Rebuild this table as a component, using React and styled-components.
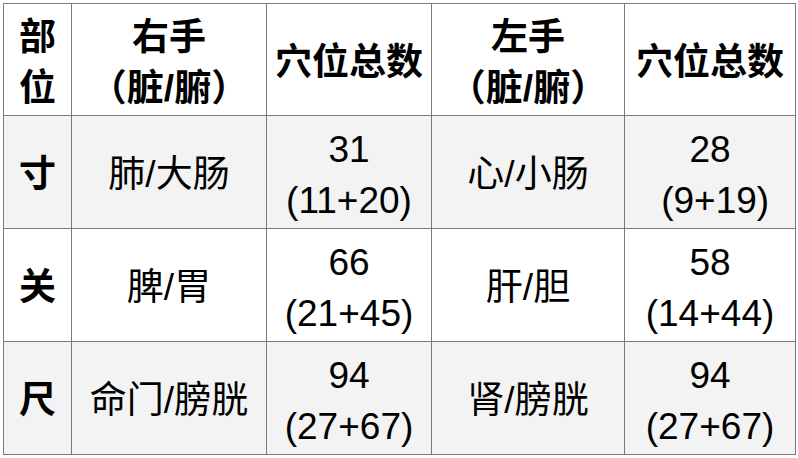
import React from 'react';
import styled, { createGlobalStyle } from 'styled-components';

const GlobalStyle = createGlobalStyle`
    html, body {
        margin: 0;
        padding: 0;
        background: #ffffff;
    }
    body {
        font-family: "Liberation Sans", "Noto Sans CJK SC", sans-serif;
        color: #000000;
    }
`;

const Table = styled.table`
    margin: 3px;
    width: 792px;
    border-collapse: collapse;
    table-layout: fixed;
    font-size: 37px;
    line-height: 51px;
`;

const Col = styled.col`
    width: ${props => props.w}px;
`;

const HeadCell = styled.th`
    border: 1px solid #7a7a7a;
    height: 105px;
    padding: 6px 0 0;
    font-weight: 700;
    text-align: center;
    vertical-align: middle;
    background: #ffffff;
`;

const Row = styled.tr`
    background: ${props => props.shaded ? '#f3f3f3' : '#ffffff'};
`;

const RowHead = styled.th`
    border: 1px solid #7a7a7a;
    height: 107px;
    padding: 5px 0 0;
    font-weight: 700;
    text-align: center;
    vertical-align: middle;
`;

const Cell = styled.td`
    border: 1px solid #7a7a7a;
    padding: 5px 0 0;
    text-align: center;
    vertical-align: middle;
`;

const Line = styled.div`
    white-space: nowrap;
`;

const rows = [
    { part: '寸', right: '肺/大肠', rTotal: '31', rSplit: '(11+20)', left: '心/小肠', lTotal: '28', lSplit: '\u00a0(9+19)' },
    { part: '关', right: '脾/胃', rTotal: '66', rSplit: '(21+45)', left: '肝/胆', lTotal: '58', lSplit: '(14+44)' },
    { part: '尺', right: '命门/膀胱', rTotal: '94', rSplit: '(27+67)', left: '肾/膀胱', lTotal: '94', lSplit: '(27+67)' },
];

const Count = ({ total, split }) => (
    <Cell>
        <Line>{total}</Line>
        <Line>{split}</Line>
    </Cell>
);

export default function App() {
    return (
        <>
            <GlobalStyle />
            <Table>
                <colgroup>
                    <Col w={68} />
                    <Col w={195} />
                    <Col w={165} />
                    <Col w={193} />
                    <Col w={171} />
                </colgroup>
                <thead>
                    <tr>
                        <HeadCell><Line>部</Line><Line>位</Line></HeadCell>
                        <HeadCell><Line>右手</Line><Line>（脏/腑）</Line></HeadCell>
                        <HeadCell>穴位总数</HeadCell>
                        <HeadCell><Line>左手</Line><Line>（脏/腑）</Line></HeadCell>
                        <HeadCell>穴位总数</HeadCell>
                    </tr>
                </thead>
                <tbody>
                    {rows.map((r, i) => (
                        <Row key={r.part} shaded={i % 2 === 0}>
                            <RowHead>{r.part}</RowHead>
                            <Cell>{r.right}</Cell>
                            <Count total={r.rTotal} split={r.rSplit} />
                            <Cell>{r.left}</Cell>
                            <Count total={r.lTotal} split={r.lSplit} />
                        </Row>
                    ))}
                </tbody>
            </Table>
        </>
    );
}
